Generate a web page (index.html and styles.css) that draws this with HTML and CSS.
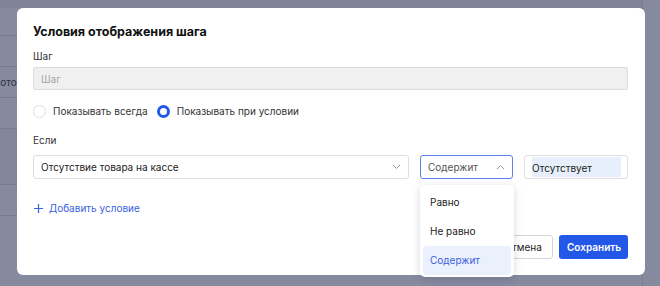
FILE: index.html
```html
<!DOCTYPE html>
<html lang="ru">
<head>
    <meta charset="UTF-8">
    <title>Условия отображения шага</title>
    <link rel="stylesheet" href="styles.css">
</head>
<body>
    <!-- page under the overlay -->
    <div class="page">
        <div class="page-top"></div>
        <div class="page-rows">
            <div class="row"></div>
            <div class="row"><span class="row-text">Фото</span></div>
            <div class="row"></div>
            <div class="row tall"></div>
            <div class="row"></div>
            <div class="row"></div>
        </div>
    </div>

    <div class="modal">
        <h2 class="modal-title">Условия отображения шага</h2>

        <label class="field-label">Шаг</label>
        <input class="text-input" type="text" placeholder="Шаг" disabled>

        <div class="radio-group">
            <label class="radio">
                <span class="radio-mark"></span>
                Показывать всегда
            </label>
            <label class="radio checked">
                <span class="radio-mark"></span>
                Показывать при условии
            </label>
        </div>

        <label class="field-label">Если</label>
        <div class="condition">
            <div class="select wide">
                <span>Отсутствие товара на кассе</span>
                <svg class="chevron" width="9" height="6" viewBox="0 0 9 6"><path d="M1 1l3.5 3.5L8 1" fill="none" stroke="#9a9a9a" stroke-width="1"/></svg>
            </div>
            <div class="select-wrap">
                <div class="select open">
                    <span>Содержит</span>
                    <svg class="chevron" width="9" height="6" viewBox="0 0 9 6"><path d="M1 5l3.5-3.5L8 5" fill="none" stroke="#9a9a9a" stroke-width="1"/></svg>
                </div>
                <ul class="dropdown">
                    <li>Равно</li>
                    <li>Не равно</li>
                    <li class="active">Содержит</li>
                </ul>
            </div>
            <div class="value-input"><span class="selected">Отсутствует</span></div>
        </div>

        <a class="add-link" href="#">
            <svg width="9" height="9" viewBox="0 0 9 9"><path d="M4.5 0v9M0 4.5h9" stroke="#3a62e0" stroke-width="1.2"/></svg>
            Добавить условие
        </a>

        <div class="actions">
            <button class="btn btn-cancel">Отмена</button>
            <button class="btn btn-save">Сохранить</button>
        </div>
    </div>
</body>
</html>
```

FILE: styles.css
```css
/* overlay + modal */
* {
    box-sizing: border-box;
}

body {
    margin: 0;
    width: 660px;
    height: 286px;
    overflow: hidden;
    font-family: Inter, "Noto Sans", sans-serif;
    background-color: #868a9f;
    position: relative;
}

.page {
    width: 643px;
    height: 286px;
    border-right: 1px solid #7a7e93;
}

.page-top {
    height: 8px;
    background-color: #7f8399;
}

.page-rows {
    padding-top: 27px;
}

.row {
    height: 31px;
    border-top: 1px solid #777b90;
    position: relative;
}

.row.tall {
    height: 56px;
    background-color: #82869b;
}

.row-text {
    position: absolute;
    left: -8px;
    top: 9px;
    font-size: 10px;
    color: #2c2f3a;
}

.modal {
    position: absolute;
    left: 17px;
    top: 8px;
    width: 628px;
    height: 267px;
    background: #fff;
    border-radius: 6px;
    padding: 16px 17px 16px 16px;
    display: flex;
    flex-direction: column;
}

.modal-title {
    margin: 0;
    font-size: 12.5px;
    line-height: 16px;
    font-weight: 700;
    color: #111;
}

.field-label {
    font-size: 10px;
    line-height: 14px;
    color: #333;
    margin-top: 9px;
}

.text-input {
    margin-top: 4px;
    height: 25px;
    width: 100%;
    border: 1px solid #dcdcdc;
    border-radius: 2px;
    background: #f0f0f0;
    padding: 0 7px;
    font-family: inherit;
    font-size: 10px;
}

.text-input::placeholder {
    color: #a6a6a6;
}

.radio-group {
    display: flex;
    gap: 9px;
    margin-top: 14px;
    margin-bottom: 6px;
}

.radio {
    display: flex;
    align-items: center;
    gap: 7px;
    font-size: 10px;
    line-height: 14px;
    color: #333;
}

.radio-mark {
    width: 13px;
    height: 13px;
    border-radius: 50%;
    border: 1px solid #dedede;
    background: #fff;
}

.radio.checked .radio-mark {
    border: 3.5px solid #2357e8;
}

.condition {
    display: flex;
    gap: 11px;
    margin-top: 8px;
}

.select {
    height: 24px;
    border: 1px solid #dedede;
    border-radius: 3px;
    display: flex;
    align-items: center;
    justify-content: space-between;
    padding: 0 7px 0 7px;
    font-size: 10px;
    color: #222;
}

.select.wide {
    width: 376px;
}

.select-wrap {
    position: relative;
    width: 93px;
}

.select.open {
    border-color: #5b83ee;
    color: #555;
}

.dropdown {
    position: absolute;
    top: 30px;
    left: 0;
    width: 94px;
    margin: 0;
    padding: 3px 3px 2px;
    list-style: none;
    background: #fff;
    border-radius: 5px;
    box-shadow: 0 2px 8px rgba(30, 40, 70, 0.18);
    z-index: 2;
}

.dropdown li {
    height: 29px;
    line-height: 29px;
    padding-left: 7px;
    font-size: 10px;
    color: #222;
    border-radius: 4px;
}

.dropdown li.active {
    background: #eaf0fc;
    color: #3a62e0;
}

.value-input {
    width: 104px;
    height: 24px;
    border: 1px solid #dedede;
    border-radius: 3px;
    padding: 1px 6px 1px 7px;
    display: flex;
}

.selected {
    flex: 1;
    background: #e8effc;
    font-size: 10px;
    line-height: 22px;
    color: #222;
}

.add-link {
    margin-top: 22px;
    display: flex;
    align-items: center;
    gap: 6px;
    font-size: 10px;
    line-height: 14px;
    color: #3a62e0;
    text-decoration: none;
    padding-left: 1px;
}

.actions {
    margin-top: 20px;
    display: flex;
    justify-content: flex-end;
    gap: 6px;
}

.btn {
    height: 24px;
    border-radius: 3px;
    font-family: inherit;
    font-size: 10px;
    padding: 0 8px;
}

.btn-cancel {
    width: 60px;
    background: #fff;
    border: 1px solid #d6d6d6;
    color: #222;
}

.btn-save {
    width: 69px;
    background: #2357e8;
    border: none;
    color: #fff;
    font-weight: 600;
}
```
